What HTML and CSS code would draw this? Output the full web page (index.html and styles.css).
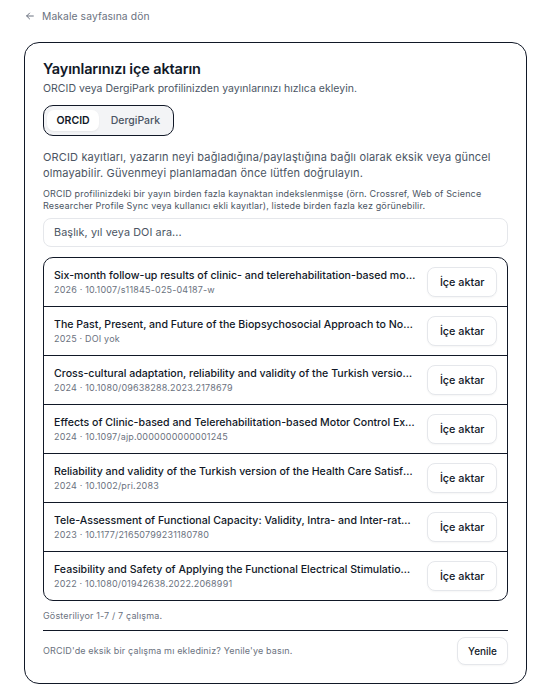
FILE: index.html
```html
<!DOCTYPE html>
<html lang="tr">
<head>
<meta charset="utf-8">
<title>Yayınlarınızı içe aktarın</title>
<link rel="stylesheet" href="styles.css">
</head>
<body>
<div class="page">
  <a class="back" href="#">
    <svg class="back-icon" viewBox="0 0 12 12" width="10" height="10" aria-hidden="true"><path d="M10 6H2M5.5 2.5L2 6l3.5 3.5" fill="none" stroke="currentColor" stroke-width="1.2" stroke-linecap="round" stroke-linejoin="round"/></svg>
    <span>Makale sayfasına dön</span>
  </a>

  <section class="card">
    <h1 class="title">Yayınlarınızı içe aktarın</h1>
    <p class="subtitle">ORCID veya DergiPark profilinizden yayınlarınızı hızlıca ekleyin.</p>

    <div class="tabs">
      <button class="tab active">ORCID</button>
      <button class="tab">DergiPark</button>
    </div>

    <p class="info">ORCID kayıtları, yazarın neyi bağladığına/paylaştığına bağlı olarak eksik veya güncel olmayabilir. Güvenmeyi planlamadan önce lütfen doğrulayın.</p>
    <p class="note">ORCID profilinizdeki bir yayın birden fazla kaynaktan indekslenmişse (örn. Crossref, Web of Science Researcher Profile Sync veya kullanıcı ekli kayıtlar), listede birden fazla kez görünebilir.</p>

    <input class="search" type="text" placeholder="Başlık, yıl veya DOI ara...">

    <ul class="list">
      <li class="row">
        <div class="row-text">
          <div class="row-title">Six-month follow-up results of clinic- and telerehabilitation-based motor control exercises in patients</div>
          <div class="row-meta">2026 · 10.1007/s11845-025-04187-w</div>
        </div>
        <button class="btn">İçe aktar</button>
      </li>
      <li class="row">
        <div class="row-text">
          <div class="row-title">The Past, Present, and Future of the Biopsychosocial Approach to Non-specific Low Back Pain</div>
          <div class="row-meta">2025 · DOI yok</div>
        </div>
        <button class="btn">İçe aktar</button>
      </li>
      <li class="row">
        <div class="row-text">
          <div class="row-title">Cross-cultural adaptation, reliability and validity of the Turkish version of the questionnaire</div>
          <div class="row-meta">2024 · 10.1080/09638288.2023.2178679</div>
        </div>
        <button class="btn">İçe aktar</button>
      </li>
      <li class="row">
        <div class="row-text">
          <div class="row-title">Effects of Clinic-based and Telerehabilitation-based Motor Control Exercises</div>
          <div class="row-meta">2024 · 10.1097/ajp.0000000000001245</div>
        </div>
        <button class="btn">İçe aktar</button>
      </li>
      <li class="row">
        <div class="row-text">
          <div class="row-title">Reliability and validity of the Turkish version of the Health Care Satisfaction Questionnaire</div>
          <div class="row-meta">2024 · 10.1002/pri.2083</div>
        </div>
        <button class="btn">İçe aktar</button>
      </li>
      <li class="row">
        <div class="row-text">
          <div class="row-title">Tele-Assessment of Functional Capacity: Validity, Intra- and Inter-rater Reliability</div>
          <div class="row-meta">2023 · 10.1177/21650799231180780</div>
        </div>
        <button class="btn">İçe aktar</button>
      </li>
      <li class="row">
        <div class="row-text">
          <div class="row-title">Feasibility and Safety of Applying the Functional Electrical Stimulation Cycling</div>
          <div class="row-meta">2022 · 10.1080/01942638.2022.2068991</div>
        </div>
        <button class="btn">İçe aktar</button>
      </li>
    </ul>

    <p class="count">Gösteriliyor 1-7 / 7 çalışma.</p>

    <div class="footer">
      <span class="footer-text">ORCID'de eksik bir çalışma mı eklediniz? Yenile'ye basın.</span>
      <button class="btn btn-small">Yenile</button>
    </div>
  </section>
</div>
</body>
</html>
```

FILE: styles.css
```css
* { box-sizing: border-box; }

html, body {
  margin: 0;
  padding: 0;
  background: #ffffff;
}

body {
  font-family: Inter, "Noto Sans", "Liberation Sans", sans-serif;
  color: #111827;
}

.page {
  padding: 9px 16px 10px 24px;
}

.back {
  display: flex;
  align-items: center;
  gap: 7px;
  height: 14px;
  padding-left: 1px;
  font-size: 10.3px;
  line-height: 14px;
  letter-spacing: 0.1px;
  color: #6b7280;
  text-decoration: none;
}

.back-icon { color: #6b7280; }

.card {
  margin-top: 19px;
  width: 503px;
  border: 1px solid #111827;
  border-radius: 15px;
  padding: 17px 18px 18px 18px;
  background: #ffffff;
}

.title {
  margin: 0;
  font-size: 14.5px;
  line-height: 18px;
  font-weight: 600;
  letter-spacing: -0.15px;
  color: #111827;
}

.subtitle {
  margin: 3px 0 0;
  font-size: 10.5px;
  line-height: 16px;
  letter-spacing: 0.03px;
  color: #4b5563;
}

.tabs {
  margin-top: 8px;
  display: inline-flex;
  gap: 2px;
  padding: 4px 3px;
  border: 1px solid #111827;
  border-radius: 10px;
  background: #f3f4f6;
}

.tab {
  font-family: inherit;
  font-size: 10.5px;
  font-weight: 500;
  line-height: 21px;
  height: 21px;
  padding: 0 9.5px;
  border: none;
  border-radius: 7px;
  background: transparent;
  color: #4b5563;
  cursor: pointer;
}

.tab.active {
  background: #ffffff;
  color: #111827;
  font-weight: 600;
  box-shadow: 0 1px 2px rgba(0,0,0,0.06);
}

.info {
  margin: 13px 0 0;
  font-size: 11px;
  line-height: 16px;
  letter-spacing: 0.15px;
  color: #4b5563;
}

.note {
  margin: 7px 0 0;
  font-size: 9px;
  line-height: 11.5px;
  letter-spacing: 0.15px;
  color: #4b5563;
}

.search {
  display: block;
  margin-top: 7px;
  width: 100%;
  height: 29px;
  padding: 0 10px;
  border: 1px solid #e5e7eb;
  border-radius: 8px;
  font-family: inherit;
  font-size: 10.8px;
  letter-spacing: 0.1px;
  color: #111827;
  outline: none;
}

.search::placeholder { color: #4b5563; }

.list {
  list-style: none;
  margin: 10px 0 0;
  padding: 0;
  border: 1px solid #111827;
  border-radius: 10px;
  overflow: hidden;
}

.row {
  display: flex;
  align-items: center;
  gap: 11px;
  height: 49px;
  padding: 0 10px;
  border-top: 1px solid #111827;
}

.row:first-child { border-top: none; height: 48px; }

.row-text {
  flex: 1;
  min-width: 0;
}

.row-title {
  font-size: 10.6px;
  line-height: 14px;
  font-weight: 500;
  color: #111827;
  white-space: nowrap;
  overflow: hidden;
  text-overflow: ellipsis;
}

.row-meta {
  margin-top: 1px;
  font-size: 9px;
  line-height: 12px;
  letter-spacing: 0.18px;
  color: #6b7280;
}

.btn {
  flex: none;
  height: 30px;
  padding: 0 11.5px;
  border: 1px solid #e5e7eb;
  border-radius: 8px;
  background: #ffffff;
  font-family: inherit;
  font-size: 10.8px;
  font-weight: 500;
  color: #111827;
  box-shadow: 0 1px 2px rgba(0,0,0,0.04);
  cursor: pointer;
}

.count {
  margin: 9px 0 0;
  font-size: 9px;
  line-height: 12px;
  letter-spacing: 0.15px;
  color: #6b7280;
}

.footer {
  margin-top: 8px;
  padding-top: 6px;
  border-top: 1px solid #111827;
  display: flex;
  align-items: center;
  justify-content: space-between;
}

.footer-text {
  font-size: 9px;
  line-height: 12px;
  letter-spacing: 0.15px;
  color: #6b7280;
}

.btn-small {
  height: 28px;
  padding: 0 10px;
  font-size: 10px;
}
```
